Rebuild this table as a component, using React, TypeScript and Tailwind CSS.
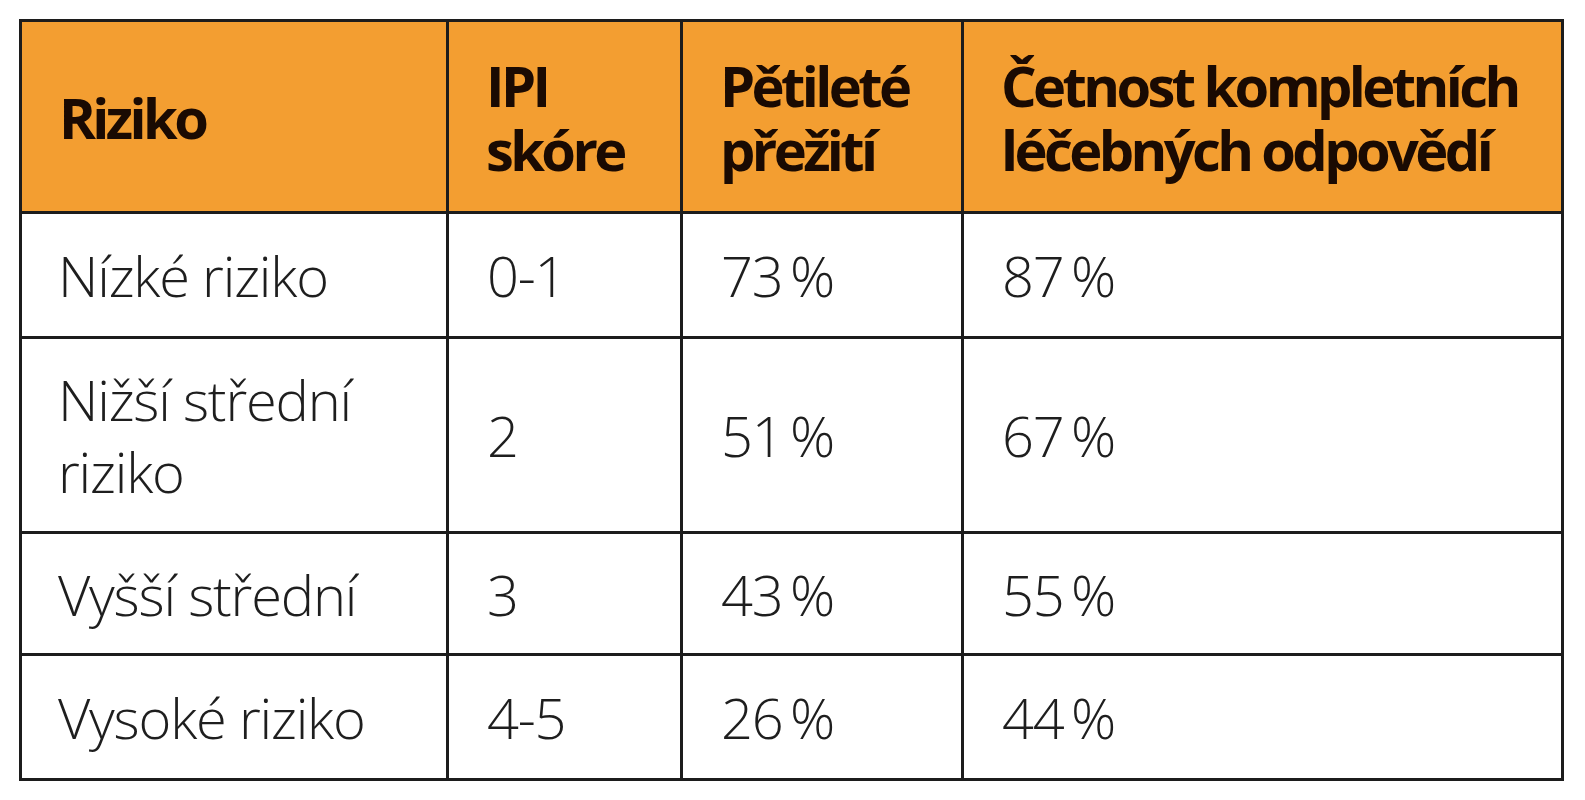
import React from "react";

const rows: { r: React.ReactNode; ipi: string; p: string; c: string; h: string }[] = [
  { r: "Nízké riziko", ipi: "0-1", p: "73 %", c: "87 %", h: "h-[125px]" },
  { r: <>Nižší střední<br />riziko</>, ipi: "2", p: "51 %", c: "67 %", h: "h-[195px]" },
  { r: "Vyšší střední", ipi: "3", p: "43 %", c: "55 %", h: "h-[122px]" },
  { r: "Vysoké riziko", ipi: "4-5", p: "26 %", c: "44 %", h: "h-[125px]" },
];

export default function App() {
  const th =
    "border-[3px] border-[#1c1c1c] pl-[37px] pr-2 text-left align-middle font-bold text-[56px] leading-[64px] tracking-[-3.6px] text-[#1a0a02]";
  const td =
    "border-[3px] border-[#1c1c1c] pl-[36px] pr-2 text-left align-middle font-light text-[56px] leading-[72px] tracking-[-1.2px] text-[#1e1e1e]";
  const tdNum = td + " pl-[38px] [word-spacing:-6px]";
  return (
    <div className="w-[1585px] h-[800px] bg-white pt-[19px] pl-[19px]" style={{ fontFamily: '"Open Sans", sans-serif' }}>
      <table className="border-collapse table-fixed w-[1542px]">
        <colgroup>
          <col className="w-[427px]" />
          <col className="w-[234px]" />
          <col className="w-[281px]" />
          <col className="w-[600px]" />
        </colgroup>
        <thead>
          <tr className="h-[192px] bg-[#f39e31]">
            <th className={th}>Riziko</th>
            <th className={th}>IPI<br />skóre</th>
            <th className={th}>Pětileté<br />přežití</th>
            <th className={th}>Četnost kompletních<br />léčebných odpovědí</th>
          </tr>
        </thead>
        <tbody>
          {rows.map((row, i) => (
            <tr key={i} className={row.h}>
              <td className={td}>{row.r}</td>
              <td className={tdNum}>{row.ipi}</td>
              <td className={tdNum}>{row.p}</td>
              <td className={tdNum}>{row.c}</td>
            </tr>
          ))}
        </tbody>
      </table>
    </div>
  );
}
